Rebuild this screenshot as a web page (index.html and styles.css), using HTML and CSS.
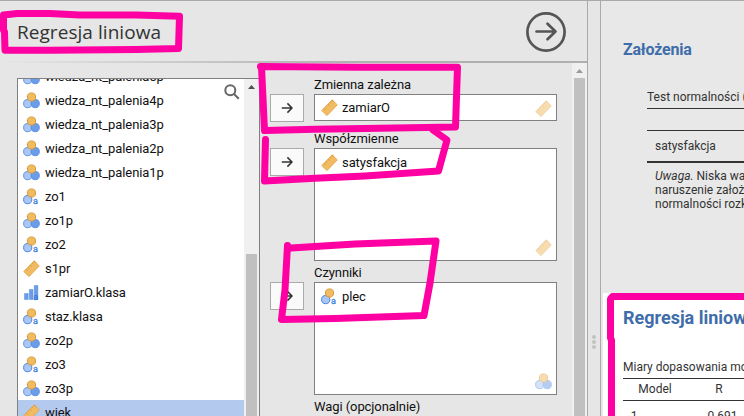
FILE: index.html
```html
<!DOCTYPE html>
<html lang="pl">
<head>
<meta charset="utf-8">
<title>Regresja liniowa</title>
<link rel="stylesheet" href="styles.css">
</head>
<body>
<svg class="defs" width="0" height="0" aria-hidden="true">
  <symbol id="nominal" viewBox="0 0 17 17">
    <circle cx="4.7" cy="11.6" r="4.1" fill="#a9c6f5" stroke="#5f95e4"/>
    <circle cx="12.2" cy="11.6" r="4.1" fill="#6b9ce8" stroke="#5a90e4"/>
    <circle cx="8.5" cy="5" r="4.1" fill="#f0bb62" stroke="#d89b34"/>
  </symbol>
  <symbol id="nominal-text" viewBox="0 0 17 17">
    <circle cx="4.7" cy="11.6" r="4.1" fill="#a9c6f5" stroke="#4a86dc"/>
    <circle cx="8.5" cy="5" r="4.1" fill="#f0bb62" stroke="#d89b34"/>
    <text class="icon-letter" x="10" y="16">a</text>
  </symbol>
  <symbol id="ordinal-text" viewBox="0 0 17 17">
    <path d="M1.500 9.500h3.700v6H1.500zM6.300 5.500H10v10H6.300zM11.200 1.500h3.700v14h-3.700z" fill="#6b9ce8" stroke="#5a90e4" stroke-width=".5"/>
    <text class="icon-letter dark" x="10.3" y="16">a</text>
  </symbol>
  <symbol id="continuous" viewBox="0 0 17 17">
    <path d="M.8 11.600 11.200.8l5.100 5.100L6 16.600z" fill="#f0bb62" stroke="#e3a545" stroke-width=".9"/>
    <path d="m3 9.300 1.500 1.500M5 7.300l1 1M7 5.200l1.500 1.500M9 3.200l1 1M11 1.200l1.500 1.500" stroke="#c98b28" fill="none" stroke-width=".7"/>
  </symbol>
  <symbol id="assign" viewBox="0 0 12 12">
    <path d="M.8 6h10M6.400 1.400 11 6l-4.600 4.600" fill="none" stroke="#333" stroke-width="1.5"/>
  </symbol>
</svg>

<div class="app">
  <section class="options">
    <header class="options-header">
      <h1>Regresja liniowa</h1>
      <svg class="hide-button" viewBox="0 0 40 40"><circle cx="20" cy="20" r="18.6"/><path d="M10.500 19.500h19M21.500 11.700l8 7.800-8 7.800"/></svg>
    </header>
    <div class="options-body">
      <div class="source">
        <div class="variables">
          <ul>
            <li><svg><use href="#nominal"/></svg>wiedza_nt_palenia5p</li>
            <li><svg><use href="#nominal"/></svg>wiedza_nt_palenia4p</li>
            <li><svg><use href="#nominal"/></svg>wiedza_nt_palenia3p</li>
            <li><svg><use href="#nominal"/></svg>wiedza_nt_palenia2p</li>
            <li><svg><use href="#nominal"/></svg>wiedza_nt_palenia1p</li>
            <li><svg><use href="#nominal-text"/></svg>zo1</li>
            <li><svg><use href="#nominal"/></svg>zo1p</li>
            <li><svg><use href="#nominal-text"/></svg>zo2</li>
            <li><svg><use href="#continuous"/></svg>s1pr</li>
            <li><svg><use href="#ordinal-text"/></svg>zamiarO.klasa</li>
            <li><svg><use href="#nominal-text"/></svg>staz.klasa</li>
            <li><svg><use href="#nominal"/></svg>zo2p</li>
            <li><svg><use href="#nominal-text"/></svg>zo3</li>
            <li><svg><use href="#nominal"/></svg>zo3p</li>
            <li class="selected"><svg><use href="#continuous"/></svg>wiek</li>
          </ul>
          <svg class="search" viewBox="0 0 16 16"><circle cx="6.3" cy="6.3" r="5"/><path d="m10 10 4.800 4.800"/></svg>
        </div>
        <div class="scrollbar source-scroll"><i class="arrow"></i><i class="thumb"></i></div>
      </div>
      <div class="targets">
        <div class="target single">
          <label>Zmienna zależna</label>
          <button><svg><use href="#assign"/></svg></button>
          <div class="drop"><span class="item"><svg><use href="#continuous"/></svg>zamiarO</span><svg class="hint"><use href="#continuous"/></svg></div>
        </div>
        <div class="target">
          <label>Współzmienne</label>
          <button><svg><use href="#assign"/></svg></button>
          <div class="drop"><span class="item"><svg><use href="#continuous"/></svg>satysfakcja</span><svg class="hint"><use href="#continuous"/></svg></div>
        </div>
        <div class="target">
          <label>Czynniki</label>
          <button><svg><use href="#assign"/></svg></button>
          <div class="drop"><span class="item"><svg><use href="#nominal-text"/></svg>plec</span><svg class="hint"><use href="#nominal"/></svg></div>
        </div>
        <div class="target single"><label>Wagi (opcjonalnie)</label></div>
      </div>
      <div class="scrollbar panel-scroll"><i class="arrow"></i><i class="thumb"></i></div>
    </div>
  </section>

  <div class="splitter"><i></i><i></i><i></i></div>

  <section class="results">
    <div class="assumptions">
      <h2>Założenia</h2>
      <div class="table">
        <p class="caption">Test normalności (Shapiro-Wilk)</p>
        <div class="head"></div>
        <div class="row">satysfakcja</div>
        <p class="note"><em>Uwaga.</em> Niska wartość<br>naruszenie założenia<br>normalności rozkładu</p>
      </div>
    </div>
    <div class="regression">
      <h2>Regresja liniowa</h2>
      <p class="caption">Miary dopasowania modelu</p>
      <div class="fit head"><span>Model</span><span>R</span></div>
      <div class="fit body"><span>1</span><span>0.691</span></div>
    </div>
  </section>
</div>

<svg class="marks" viewBox="0 0 744 416">
  <path d="M3.500 30V15L17 13.500h33L80 15h56l43.500 1.300L178.500 48.500 136 49.500l-86 .7H5L4.500 32"/>
  <path d="M260.500 66.500 358 67.200h99.500L455.500 127 365 128.500l-50 .7-50.500 1.400L261.500 67"/>
  <path d="M265.500 139.500 264.500 181 315 178.300 365 176 438.500 171 447 140 433 130"/>
  <path d="M287.500 245.500 285 290 281.500 319.500 335 318.500 424 315.500 430 283 436 241 355 244 291 248"/>
  <path d="M744 296.500H612.500L610.500 299v39l1 2v76"/>
</svg>
</body>
</html>
```
FILE: styles.css
```css
* { box-sizing: border-box; }
body { margin: 0; width: 744px; height: 416px; overflow: hidden; background: #e6e6e6; font-family: Roboto, "Liberation Sans", sans-serif; font-size: 13px; color: #111; }
h1, h2, p, ul { margin: 0; padding: 0; }
.defs { position: absolute; }
.icon-letter { font: 9px Roboto, sans-serif; fill: #3f7fdc; stroke: #3f7fdc; stroke-width: .3px; }
.icon-letter.dark { fill: #2f6fd0; }
.app { display: flex; height: 416px; border-top: 1px solid #aaa; }

.options { display: flex; flex-direction: column; width: 588px; border-right: 1px solid #aaa; letter-spacing: -.08px; }
.options-header { display: flex; flex: none; justify-content: space-between; align-items: center; height: 62px; padding: 0 21px 0 17px; border-bottom: 2px solid; border-image: linear-gradient(90deg, #e6e6e6, #b0b0b0 60%) 1; }
h1 { padding-top: 2px; font: 19px/28px "Open Sans", sans-serif; letter-spacing: .05px; color: #333; }
.hide-button { width: 40px; height: 40px; margin-top: 2px; fill: none; stroke: #555; stroke-width: 2.7; stroke-linecap: round; stroke-linejoin: round; }
.options-body { display: flex; flex: 1; min-height: 0; overflow: hidden; }

.source { display: flex; width: 243px; height: 340px; margin: 15px 0 0 17px; border: solid #808080; border-width: 1px 1px 0; }
.variables { position: relative; width: 226px; overflow: hidden; background: #fff; }
.variables ul { margin-top: -15px; list-style: none; }
.variables li { display: flex; align-items: center; height: 24px; padding-left: 5px; gap: 5px; }
.variables li svg, .item svg { flex: none; width: 17px; height: 17px; }
.variables .selected { background: #b4c9ee; }
.search { position: absolute; top: 5px; right: 4px; width: 16px; height: 16px; fill: none; stroke: #666; stroke-width: 2; }

.scrollbar { display: flex; flex-direction: column; align-items: center; width: 15px; background: #f0f0f0; }
.arrow { width: 7px; height: 4px; background: #999; clip-path: polygon(50% 0, 100% 100%, 0 100%); }
.thumb { flex: 1; width: 11px; background: #c0c0c0; }
.source-scroll .arrow { margin: 6px 0 165px; background: #505050; }
.panel-scroll .arrow { margin: 6px 0 5px; }

.targets { width: 312px; padding-top: 13px; }
.target { display: grid; grid-template: 18px 113px / 34px 243px; column-gap: 10px; margin: 0 0 3px 10px; }
.target.single { grid-template-rows: 18px 28px; margin-bottom: 8px; }
.target label { grid-column: 2; line-height: 18px; }
.target button { display: flex; justify-content: center; align-items: center; width: 34px; height: 28px; padding: 0; border: 1px solid #aaa; background: #fafafa; }
.target button svg { width: 12px; height: 12px; }
.drop { display: flex; justify-content: space-between; height: 113px; padding: 4px 4px 4px 6px; border: 1px solid #808080; background: #fff; }
.single .drop { height: 27px; padding: 3px 4px 3px 6px; }
.item { display: flex; align-items: center; height: 18px; gap: 4px; }
.hint { align-self: flex-end; width: 17px; height: 17px; opacity: .5; }

.splitter { display: flex; flex-direction: column; align-items: center; gap: 1px; width: 12px; padding-top: 334px; }
.splitter i { width: 4px; height: 4px; border-radius: 50%; background: #c2c2c2; }

.results { flex: 1; min-width: 0; overflow: hidden; border-left: 1px solid #aaa; background: #e8e8e8; color: #333; font-size: 12px; line-height: 14px; white-space: nowrap; }
.results h2 { color: #3e6da9; font-weight: 700; }
.assumptions { height: 292px; padding: 39px 0 0 22px; }
.assumptions h2 { font-size: 16px; line-height: 20px; letter-spacing: -.2px; }
.table { margin: 30px 0 0 24px; }
.table .caption { height: 18px; }
.table .head { height: 23px; border: solid #333; border-width: 1px 0; }
.table .row { height: 32px; padding: 8px 8px 0; border-bottom: 2px solid #333; }
.note { padding: 6px 8px; }
.regression { height: 123px; margin-left: 2px; padding: 13px 0 0 20px; background: #fff; }
.regression h2 { font-size: 18px; line-height: 24px; }
.regression .caption { margin-top: 30px; height: 18px; }
.fit { display: grid; grid-template-columns: 64px 64px; }
.fit span { text-align: center; }
.fit.head { height: 23px; padding-top: 3px; border: solid #333; border-width: 1px 0; }
.fit.body { padding-top: 8px; }
.fit.body span:first-child { padding-right: 42px; }
.fit.body span:last-child { padding-left: 7px; }

.marks { position: absolute; top: 0; left: 0; width: 744px; height: 416px; fill: none; stroke: #ff00a2; stroke-width: 7; stroke-linejoin: round; stroke-linecap: round; pointer-events: none; }
```
